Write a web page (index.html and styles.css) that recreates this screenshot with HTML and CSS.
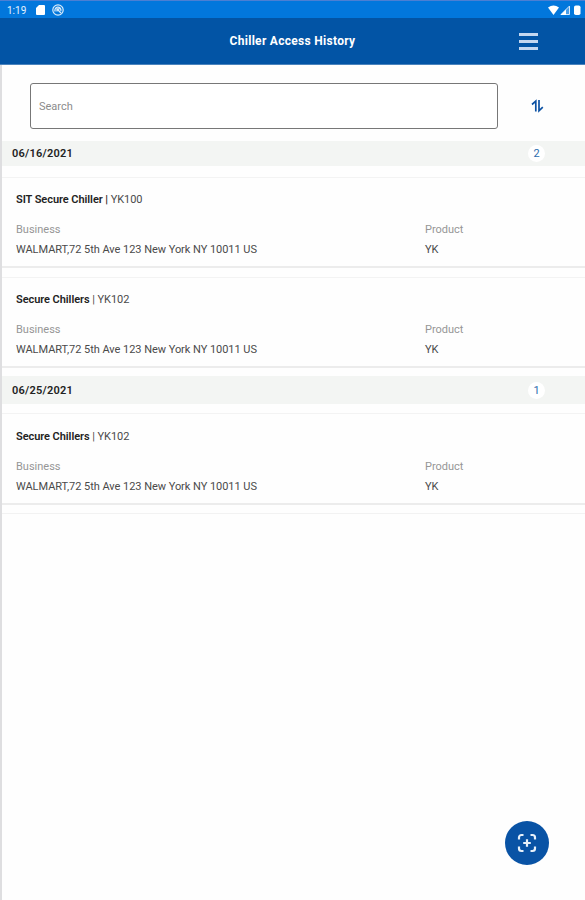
FILE: index.html
```html
<!DOCTYPE html>
<html lang="en">
<head>
    <meta charset="UTF-8">
    <meta name="viewport" content="width=device-width, initial-scale=1.0">
    <title>Chiller Access History</title>
    <link rel="stylesheet" href="styles.css">
</head>
<body>

    <!-- Status bar -->
    <div class="status-bar">
        <span class="time">1:19</span>
        <svg class="sd-icon" width="9" height="10" viewBox="0 0 9 10"><path d="M3 0h5a1 1 0 0 1 1 1v8a1 1 0 0 1-1 1H1a1 1 0 0 1-1-1V3z" fill="#fff"/></svg>
        <svg class="sync-icon" width="12" height="12" viewBox="0 0 12 12" fill="none" stroke="#d9ebfa">
            <circle cx="6" cy="6" r="5.2" stroke-width="1.2"/>
            <path d="M3.2 7.5A3 3 0 1 1 8.8 7M5 5l4 4M5 7.5V5h2.500" stroke-width="1.3"/>
        </svg>
        <svg class="signal-icons" width="34" height="11" viewBox="0 0 34 11">
            <path d="M0 2.500Q5.500-1.500 11 2.500L5.500 10z" fill="#fff"/>
            <path d="M21.500 1v8.500H13z" fill="#4a9ee8" stroke="#d5e8fb"/>
            <path d="M18 4.500V10h-5.500z" fill="#fff"/>
            <rect x="26" y="0.500" width="6.500" height="9.500" rx="1.800" fill="#fff"/>
        </svg>
    </div>

    <header>
        <h1>Chiller Access History</h1>
        <button class="menu-button" aria-label="Menu">
            <span></span>
            <span></span>
            <span></span>
        </button>
    </header>

    <main>
        <div class="search-row">
            <input class="search" type="text" placeholder="Search">
            <button class="sort-button" aria-label="Sort">
                <svg width="14" height="14" viewBox="0 0 14 14" fill="none" stroke="#0b51a3" stroke-width="1.700">
                    <path d="M5.800 12.500V2.200L2 5.500M9 1v10.800L12.800 8.200"/>
                </svg>
            </button>
        </div>

        <section class="day first-day">
            <div class="day-header">
                <span class="date">06/16/2021</span>
                <span class="count">2</span>
            </div>
            <article class="card">
                <h2><b>SIT Secure Chiller |</b> YK100</h2>
                <div class="details">
                    <span class="label">Business</span>
                    <span class="label">Product</span>
                    <span class="address">WALMART,72 5th Ave 123 New York NY 10011 US</span>
                    <span>YK</span>
                </div>
            </article>
            <article class="card">
                <h2><b>Secure Chillers</b> | YK102</h2>
                <div class="details">
                    <span class="label">Business</span>
                    <span class="label">Product</span>
                    <span class="address">WALMART,72 5th Ave 123 New York NY 10011 US</span>
                    <span>YK</span>
                </div>
            </article>
        </section>

        <section class="day last-day">
            <div class="day-header">
                <span class="date">06/25/2021</span>
                <span class="count">1</span>
            </div>
            <article class="card">
                <h2><b>Secure Chillers</b> | YK102</h2>
                <div class="details">
                    <span class="label">Business</span>
                    <span class="label">Product</span>
                    <span class="address">WALMART,72 5th Ave 123 New York NY 10011 US</span>
                    <span>YK</span>
                </div>
            </article>
        </section>
    </main>

    <!-- Floating scan button -->
    <button class="scan-button" aria-label="Scan">
        <svg width="20" height="20" viewBox="0 0 20 20" fill="none" stroke="#e8f1fa" stroke-width="2.200">
            <path d="M2 6.500V4.500A2.500 2.500 0 0 1 4.500 2h2M13.500 2h2A2.500 2.500 0 0 1 18 4.500v2M18 13.500v2a2.500 2.500 0 0 1-2.500 2.500h-2M6.500 18h-2A2.500 2.500 0 0 1 2 15.500v-2"/>
            <path d="M10 6.200v7.600M6.200 10h7.600"/>
        </svg>
    </button>

</body>
</html>
```

FILE: styles.css
```css
* {
    box-sizing: border-box;
}

body {
    margin: 0;
    height: 100vh;
    display: flex;
    flex-direction: column;
    font-family: Roboto, sans-serif;
    font-size: 11px;
    color: #4a4a4a;
    background-color: #fefefe;
    overflow: hidden;
}

button {
    border: none;
    background: none;
    padding: 0;
}

svg {
    display: block;
}

/* Status bar */
.status-bar {
    height: 18px;
    display: flex;
    align-items: center;
    padding: 1px 3px 0 7px;
    background-color: #0277dc;
    border-top: 1px solid #4b7fd3;
    color: #e8f3fd;
}

.time {
    width: 29px;
    font-size: 10px;
}

.sync-icon {
    margin-left: 7px;
}

.signal-icons {
    margin-left: auto;
}

/* Header */
header {
    height: 47px;
    display: grid;
    grid-template-columns: 1fr auto 1fr;
    align-items: center;
    background-color: #0254a5;
    border-bottom: 1px solid #4a83bd;
}

h1 {
    grid-column: 2;
    margin: 0;
    font-size: 12px;
    line-height: 16px;
    font-weight: 700;
    letter-spacing: 0.3px;
    color: #fff;
}

.menu-button {
    justify-self: end;
    width: 19px;
    margin: 1px 47px 0 0;
    display: grid;
    gap: 4px;
}

.menu-button span {
    height: 3px;
    background-color: #c3d7f0;
}

/* Search */
main {
    flex: 1;
    border-left: 2px solid #dedee0;
}

.search-row {
    display: flex;
    align-items: center;
    padding: 18px 41px 12px 28px;
}

.search {
    width: 468px;
    height: 46px;
    padding: 0 8px;
    border: 1px solid #777;
    border-radius: 3px;
    background-color: #fff;
    font: inherit;
}

.search::placeholder {
    color: #8c8c8c;
}

.sort-button {
    margin-left: auto;
}

/* Days */
.day-header {
    height: 28px;
    display: flex;
    align-items: center;
    justify-content: space-between;
    padding: 0 40px 0 10px;
    background-color: #f3f5f3;
}

.first-day .day-header {
    height: 25px;
    margin-bottom: 11px;
}

.date {
    font-weight: 600;
    letter-spacing: 0.25px;
    color: #222;
}

.count {
    width: 17px;
    height: 17px;
    border-radius: 50%;
    background-color: #fff;
    color: #2c6cae;
    line-height: 17px;
    text-align: center;
}

.card {
    height: 91px;
    margin-bottom: 9px;
    padding: 14px 0 0 14px;
    border-top: 1px solid #f3f3f3;
    border-bottom: 2px solid #ececec;
}

.first-day .card:last-child {
    margin-bottom: 8px;
}

.last-day {
    border-bottom: 1px solid #f2f2f2;
}

.last-day .card {
    height: 92px;
    margin: 9px 0 8px;
    padding-top: 15px;
}

h2 {
    margin: 0 0 12px;
    font-size: 11px;
    line-height: 16px;
    font-weight: 400;
    letter-spacing: -0.06px;
}

h2 b {
    font-weight: 600;
    color: #222;
}

.details {
    display: grid;
    grid-template-columns: 409px 1fr;
    grid-template-rows: 20px 20px;
    line-height: 20px;
}

.address {
    letter-spacing: -0.04px;
}

.label {
    color: #969696;
}

/* Scan button */
.scan-button {
    position: absolute;
    right: 36px;
    bottom: 35px;
    width: 44px;
    height: 44px;
    display: grid;
    place-items: center;
    border-radius: 50%;
    background-color: #0953a5;
}
```
